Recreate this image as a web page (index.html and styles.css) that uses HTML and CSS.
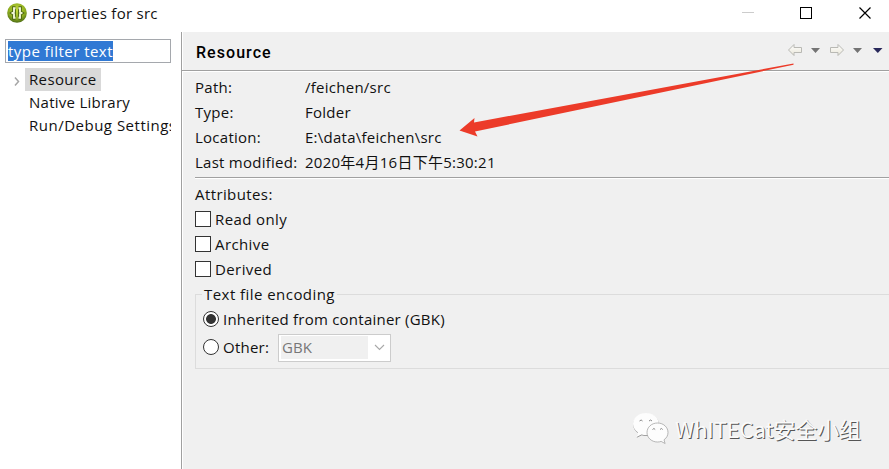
FILE: index.html
```
<!DOCTYPE html>
<html lang="en">
<head>
<meta charset="utf-8">
<title>Properties for src</title>
<link rel="stylesheet" href="styles.css">
</head>
<body>
<div class="window">
  <header class="titlebar">
    <svg class="app-icon" width="20" height="20" viewBox="0 0 20 20">
      <defs><radialGradient id="g" cx=".5" cy=".35" r=".65"><stop offset="0" stop-color="#c3d93c"/><stop offset=".65" stop-color="#8fae20"/><stop offset="1" stop-color="#4c6b16"/></radialGradient></defs>
      <circle cx="10" cy="10" r="9.800" fill="url(#g)"/>
      <g fill="none" stroke="#4d6814" stroke-width="3.800"><path d="M8.500 5.200H7V9L5.500 10 7 11v3.800h1.500M11.500 5.200H13V9l1.500 1-1.500 1v3.800h-1.500"/></g>
      <g fill="none" stroke="#f3f7d8" stroke-width="1.900"><path d="M8.500 5.200H7V9L5.500 10 7 11v3.800h1.500M11.500 5.200H13V9l1.500 1-1.500 1v3.800h-1.500"/></g>
    </svg>
    <span class="title">Properties for src</span>
    <svg class="controls" width="147" height="32" viewBox="742 0 147 32" fill="none" shape-rendering="crispEdges">
      <path d="M742 12.500h12" stroke="#ccc"/>
      <path d="M800.500 7.500h11v11h-11z" stroke="#000"/>
      <path d="M859.500 7.500l11 11M870.500 7.500l-11 11" stroke="#000" stroke-width="1.200" shape-rendering="auto"/>
    </svg>
  </header>
  <div class="body">
    <aside class="sidebar">
      <div class="filter"><span>type filter text</span></div>
      <ul class="tree">
        <li class="selected"><svg width="6" height="9" viewBox="0 0 6 9"><path d="M1 .5l3.500 4L1 8.500" fill="none" stroke="#a6a6a6" stroke-width="1.500"/></svg><span>Resource</span></li>
        <li><span>Native Library</span></li>
        <li><span class="clipped">Run/Debug Settings</span></li>
      </ul>
    </aside>
    <main class="panel">
      <div class="panel-head">
        <h1>Resource</h1>
        <svg class="nav" width="102" height="16" viewBox="787 42 102 16">
          <defs><linearGradient id="a" x2="0" y2="1"><stop offset="0" stop-color="#fff"/><stop offset="1" stop-color="#e9e6d8"/></linearGradient></defs>
          <g fill="url(#a)" stroke="#b9b9b4">
            <path d="M788.500 50l5.500-5.500v3h7.500v5H794v3z"/>
            <path d="M843.500 50l-5.500-5.500v3h-7.500v5h7.500v3z"/>
          </g>
          <path d="M811 48h9l-4.500 5zM853 48h9l-4.500 5z" fill="#747474"/>
          <path d="M873 48h9.500l-4.700 5z" fill="#28285a"/>
        </svg>
      </div>
      <div class="content">
        <dl class="facts">
          <dt>Path:</dt><dd>/feichen/src</dd>
          <dt>Type:</dt><dd>Folder</dd>
          <dt>Location:</dt><dd>E:\data\feichen\src</dd>
          <dt>Last modified:</dt><dd>2020年4月16日下午5:30:21</dd>
        </dl>
        <div class="attributes">
          <div class="row">Attributes:</div>
          <div class="row"><i class="box"></i><span>Read only</span></div>
          <div class="row"><i class="box"></i><span>Archive</span></div>
          <div class="row"><i class="box"></i><span>Derived</span></div>
        </div>
        <fieldset class="encoding">
          <legend>Text file encoding</legend>
          <div class="option first"><i class="radio on"></i><span>Inherited from container (GBK)</span></div>
          <div class="option other"><i class="radio"></i><span>Other:</span>
            <div class="combo"><span>GBK</span><svg width="11" height="7" viewBox="0 0 11 7"><path d="M1 1l4.500 4.500L10 1" fill="none" stroke="#a8a8a8" stroke-width="1.100"/></svg></div>
          </div>
        </fieldset>
      </div>
    </main>
  </div>
  <svg class="pointer" width="340" height="80" viewBox="457 60 340 80"><path d="M459.500 130.500L474.500 118l-.5 4.500L793.500 63.500v1.200L475 131.500l2.500 5z" fill="#ec3b29"/></svg>
  <div class="watermark">
    <svg width="37" height="32" viewBox="0 0 37 32">
      <path d="M13 0C5.800 0 0 4.800 0 11c0 3.600 2 6.500 5 8.500L3.500 24l5-2.500c1.500.4 3 .6 4.500.6 7 0 13-4.900 13-11.100S20 0 13 0z" fill="#888" transform="translate(.2 .7)"/>
      <path d="M13 0C5.800 0 0 4.800 0 11c0 3.600 2 6.500 5 8.500L3.500 24l5-2.500c1.500.4 3 .6 4.500.6 7 0 13-4.900 13-11.100S20 0 13 0z" fill="#fdfdfd"/>
      <path d="M24.500 10C18.500 10 14 14.300 14 19.500S18.500 29 24.500 29c1.200 0 2.500-.2 3.600-.6l4 2.100-1.100-3.700c2.500-1.700 4-4.300 4-7.300 0-5.200-4.500-9.500-10.500-9.500z" fill="#fdfdfd" stroke="#999" stroke-width=".7"/>
      <path d="M6.500 8q1.800-2 3 0M16 8q1.800-2 3 0M19.500 16.500q1.500-2 2.700 0M27 16.500q1.500-2 2.700 0" fill="none" stroke="#888"/>
    </svg>
    <span>WhITECat安全小组</span>
  </div>
</div>
</body>
</html>
```
FILE: styles.css
```
* { box-sizing: border-box; }
body { margin: 0; font: 15px/25px "Open Sans", "Noto Sans CJK SC", sans-serif; letter-spacing: .26px; color: #111; }
.window { position: relative; width: 889px; height: 469px; overflow: hidden; background: #fff; display: flex; flex-direction: column; white-space: nowrap; }
.titlebar { height: 32px; display: flex; align-items: flex-start; }
.app-icon { margin: 3px 5px 0 7px; }
.title { line-height: 26px; }
.controls { margin-left: auto; }
.body { flex: 1; display: flex; }
.sidebar { width: 181px; padding: 7px 10px 0 5px; }
.filter { height: 24px; border: 1px solid #a5a8ad; padding: 1px 2px; line-height: 20px; }
.filter span { display: inline-block; height: 20px; background: #3079d4; color: #fff; letter-spacing: .45px; }
.tree { list-style: none; margin: 5px 0 0; padding: 0; overflow: hidden; line-height: 23px; }
.tree li { display: flex; align-items: center; height: 23px; padding-left: 24px; }
.tree .selected { padding-left: 9px; }
.selected svg { margin: 3px 5px 0 0; }
.selected span { background: #d9d9d9; padding: 0 4px; letter-spacing: .35px; }
.clipped { letter-spacing: .5px; }
.panel { flex: 1; min-width: 0; background: #f0f0f0; border-left: 1px solid #a0a0a0; box-shadow: inset 1px 0 #fff; }
.panel-head { height: 40px; display: flex; justify-content: space-between; border-bottom: 1px solid #fff; box-shadow: inset 0 -1px #a0a0a0; padding: 8px 0 0 14px; }
h1 { margin: 0; font: 500 16px/25px Roboto, sans-serif; letter-spacing: 1.05px; color: #000; }
.nav { margin-top: 2px; }
.content { padding: 3px 0 0 13px; }
.facts { display: grid; grid-template-columns: 110px 1fr; grid-auto-rows: 25px; margin: 0; height: 104px; border-bottom: 1px solid #fff; box-shadow: inset 0 -1px #a0a0a0; }
dd { margin: 0; }
.attributes { padding-top: 3px; height: 103px; letter-spacing: .4px; }
.row { display: flex; align-items: center; height: 25px; gap: 4px; }
.box { width: 16px; height: 16px; margin-top: -2px; border: 1px solid #333; background: #fff; }
.encoding { margin: 0 -2px 0 0; border: 1px solid #dcdcdc; padding: 0 0 0 7px; height: 87px; min-width: 0; }
legend { margin-left: -1px; padding: 0 2px; line-height: 25px; letter-spacing: .45px; }
.option { display: flex; align-items: center; gap: 4px; height: 25px; letter-spacing: .23px; }
.option .radio { margin-top: -1px; }
.other { height: 31px; }
.radio { width: 16px; height: 16px; border: 1px solid #333; border-radius: 50%; background: #fff; }
.on { background: radial-gradient(circle, #333 0 4.500px, #fff 5.300px); }
.combo { width: 113px; height: 28px; margin-left: 5px; border: 1px solid #ccc; background: #fff; padding: 2px 5px 2px 2px; display: flex; align-items: center; justify-content: space-between; }
.combo span { width: 87px; height: 23px; line-height: 22px; padding-left: 1px; background: #f0f0f0; color: #777; letter-spacing: 0; }
.pointer { position: absolute; left: 457px; top: 60px; }
.watermark { position: absolute; left: 633px; top: 413px; display: flex; font: 22px/30px "Noto Sans CJK SC", sans-serif; letter-spacing: -.15px; color: #fafafa; text-shadow: 1px 1px #555; gap: 5px; }
```
